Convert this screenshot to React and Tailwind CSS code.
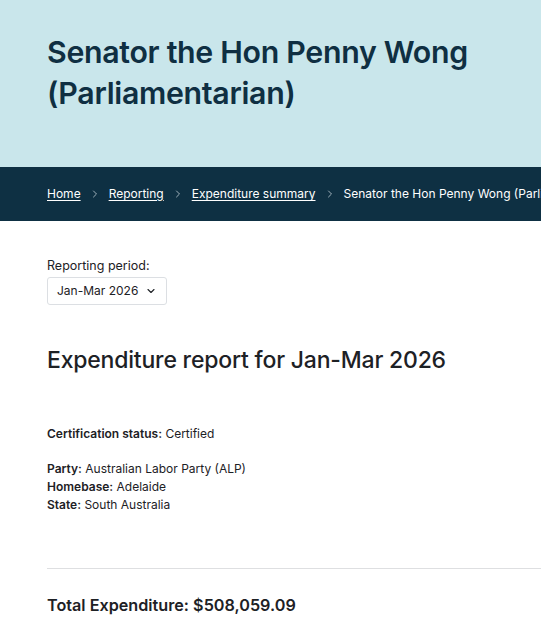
import { ChevronDown, ChevronRight } from "lucide-react";

const crumbs = ["Home", "Reporting", "Expenditure summary"];

function Field({ label, value }) {
  return (
    <p>
      <span className="font-semibold">{label}:</span> {value}
    </p>
  );
}

export default function App() {
  return (
    <div className="min-h-[641px] w-full overflow-hidden bg-white font-[Inter,sans-serif] text-[#1d2125]">
      {/* Page title */}
      <header className="bg-[#c9e6eb] px-[47px] pt-[32px] pb-[53px]">
        <h1 className="text-[30.3px] leading-[41px] font-semibold tracking-[-0.3px] text-[#0f2f42]">
          Senator the Hon Penny Wong
          <br />
          (Parliamentarian)
        </h1>
      </header>

      {/* Breadcrumb */}
      <nav className="flex h-[54px] items-center whitespace-nowrap bg-[#0e3043] px-[47px] text-[12px] text-white">
        {crumbs.map((c) => (
          <span key={c} className="flex items-center">
            <a href="#" className="underline underline-offset-2">
              {c}
            </a>
            <ChevronRight className="mx-[8px] h-[12px] w-[12px] text-[#9fb0ba]" strokeWidth={2} />
          </span>
        ))}
        <span>Senator the Hon Penny Wong (Parliamentarian)</span>
      </nav>

      <main className="px-[47px]">
        {/* Period selector */}
        <div className="pt-[36px]">
          <label className="block text-[12.5px] leading-[18px]">Reporting period:</label>
          <button className="mt-[2px] flex h-[28px] items-center gap-[7px] whitespace-nowrap rounded-[3px] border border-[#dcdfe3] pr-[9px] pl-[9px] text-[12px]">
            Jan-Mar 2026
            <ChevronDown className="h-[12px] w-[12px]" strokeWidth={2.2} />
          </button>
        </div>

        <h2 className="mt-[39px] text-[23px] leading-[32px] font-medium tracking-[-0.2px] text-[#1d2125]">
          Expenditure report for Jan-Mar 2026
        </h2>

        <div className="mt-[49px] text-[12px] leading-[18px]">
          <Field label="Certification status" value="Certified" />
          <div className="mt-[17px]">
            <Field label="Party" value="Australian Labor Party (ALP)" />
            <Field label="Homebase" value="Adelaide" />
            <Field label="State" value="South Australia" />
          </div>
        </div>

        <hr className="mt-[54px] -mr-[47px] border-t border-[#dedfe1]" />

        <p className="mt-[24px] text-[16.2px] leading-[24px] font-semibold text-[#1d2125]">
          Total Expenditure: $508,059.09
        </p>
      </main>
    </div>
  );
}
